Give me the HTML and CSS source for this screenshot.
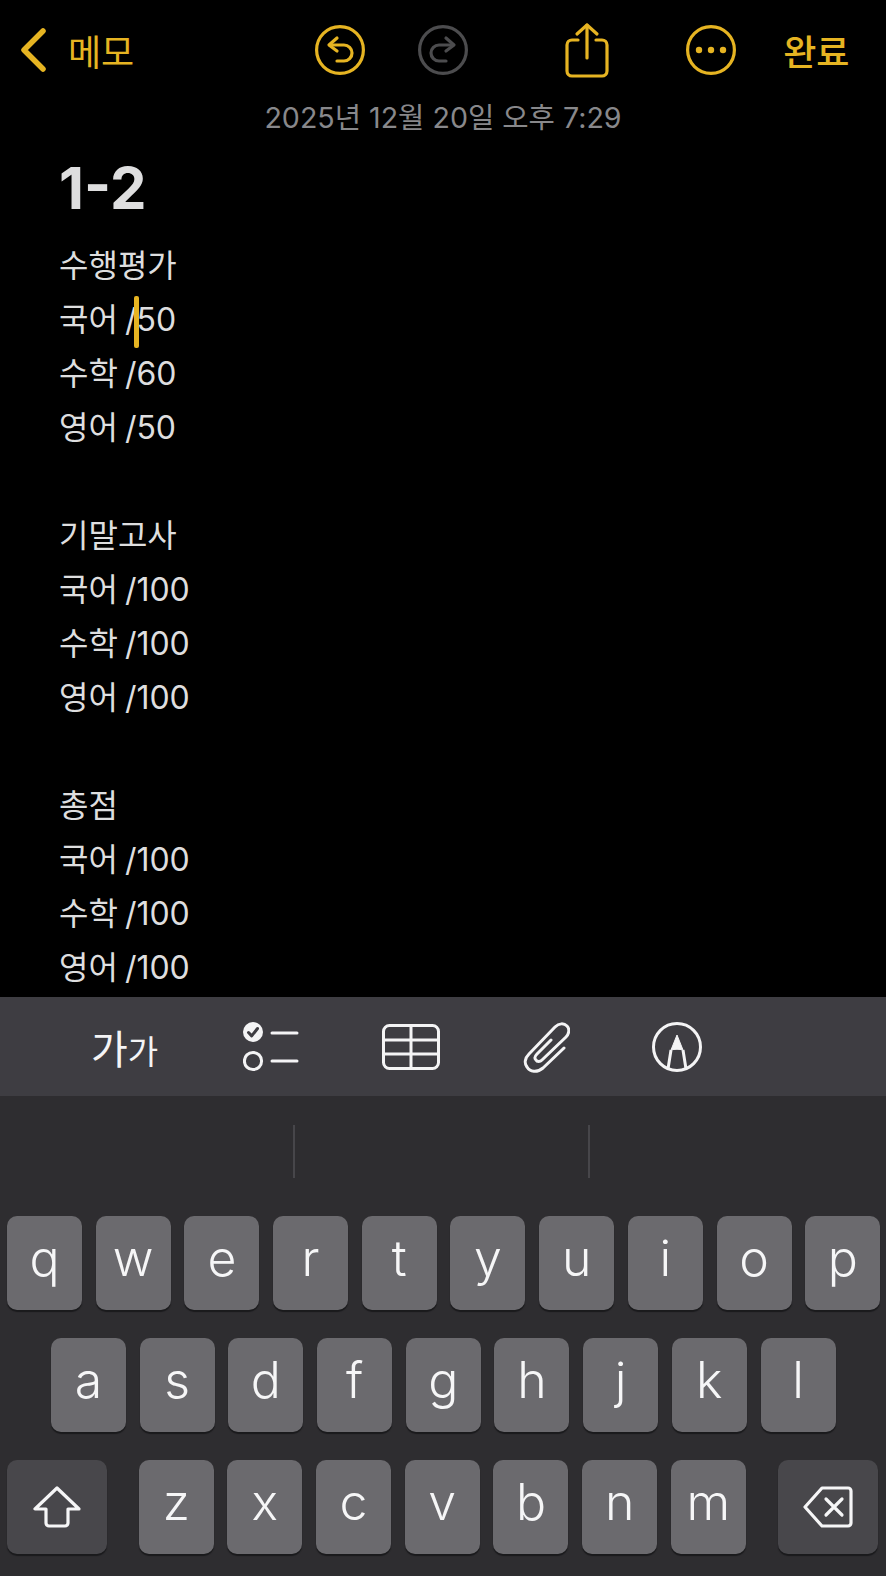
FILE: index.html
```html
<!DOCTYPE html>
<html lang="ko">
<head>
    <meta charset="UTF-8">
    <meta name="viewport" content="width=device-width, initial-scale=1.0">
    <title>메모</title>
    <link rel="stylesheet" href="styles.css">
</head>
<body>
    <div class="page">
        <header class="nav">
            <svg class="nav-back" width="26" height="44" viewBox="0 0 26 44"><path d="M23 3 4 22l19 19" fill="none" stroke="currentColor" stroke-width="5.5" stroke-linecap="round" stroke-linejoin="round"/></svg>
            <span class="nav-label">메모</span>
            <svg class="nav-undo" width="50" height="50" viewBox="0 0 50 50" fill="none" stroke="currentColor" stroke-width="3.2" stroke-linecap="round" stroke-linejoin="round"><circle cx="25" cy="25" r="23.4"/><path d="M15 20h14a8 8 0 0 1 0 16h-7"/><path d="M22 13l-8 7 8 6"/></svg>
            <svg class="nav-redo" width="50" height="50" viewBox="0 0 50 50" fill="none" stroke="currentColor" stroke-width="3.2" stroke-linecap="round" stroke-linejoin="round"><circle cx="25" cy="25" r="23.4"/><path d="M35 20H21a8 8 0 0 0 0 16h7"/><path d="M28 13l8 7-8 6"/></svg>
            <svg class="nav-share" width="44" height="56" viewBox="0 0 44 56" fill="none" stroke="currentColor" stroke-width="3.2" stroke-linecap="round" stroke-linejoin="round"><path d="M13 18H7a5 5 0 0 0-5 5v26a5 5 0 0 0 5 5h30a5 5 0 0 0 5-5V23a5 5 0 0 0-5-5h-6"/><path d="M22 36V3"/><path d="M12 12l10-9 10 9"/></svg>
            <svg class="nav-more" width="50" height="50" viewBox="0 0 50 50"><circle cx="25" cy="25" r="23.4" fill="none" stroke="currentColor" stroke-width="3.2"/><circle cx="13" cy="25" r="3.2" fill="currentColor"/><circle cx="25" cy="25" r="3.2" fill="currentColor"/><circle cx="37" cy="25" r="3.2" fill="currentColor"/></svg>
            <span class="nav-done">완료</span>
        </header>

        <p class="note-date">2025년 12월 20일 오후 7:29</p>

        <main class="note">
            <h1 class="note-title">1-2</h1>
            <div class="note-line">수행평가</div>
            <div class="note-line">국어 /<span class="caret"></span>50</div>
            <div class="note-line">수학 /60</div>
            <div class="note-line">영어 /50</div>
            <div class="note-line">&nbsp;</div>
            <div class="note-line">기말고사</div>
            <div class="note-line">국어 /100</div>
            <div class="note-line">수학 /100</div>
            <div class="note-line">영어 /100</div>
            <div class="note-line">&nbsp;</div>
            <div class="note-line">총점</div>
            <div class="note-line">국어 /100</div>
            <div class="note-line">수학 /100</div>
            <div class="note-line">영어 /100</div>
        </main>

        <div class="toolbar">
            <span class="tool-format">가<small>가</small></span>
            <svg class="tool-list" width="56" height="50" viewBox="0 0 56 50" fill="none" stroke="currentColor" stroke-width="3" stroke-linecap="round">
                <circle cx="10" cy="10" r="10" fill="currentColor" stroke="none"/>
                <path d="M5.5 10.5l3.2 3.4 5.8-7.4" stroke="#3e3d42" stroke-linejoin="round"/>
                <circle cx="10" cy="39" r="8.6"/>
                <path d="M29 11h25M29 39h25"/>
            </svg>
            <svg class="tool-table" width="58" height="46" viewBox="0 0 58 46" fill="none" stroke="currentColor" stroke-width="3"><rect x="1.5" y="1.5" width="55" height="43" rx="6"/><path d="M1.5 16h55M1.5 30h55M29 1.5v43"/></svg>
            <svg class="tool-clip" width="48" height="52" viewBox="0 0 48 52" fill="none" stroke="currentColor" stroke-width="3" stroke-linecap="round" stroke-linejoin="round"><path d="M42 27 21 47c-6 5-13 4-16-1-3-4-2-9 2-13L33 6c4-4 9-4 12-1 3 3 2 8-1 11L20 39c-2 2-5 2-6 0-2-2-1-4 1-6l14-14"/></svg>
            <svg class="tool-markup" width="50" height="50" viewBox="0 0 50 50" fill="none" stroke="currentColor" stroke-width="3"><circle cx="25" cy="25" r="23.5"/><path d="M19 28l-3 19M31 28l3 19"/><path d="M25 13l-6 15c4-1 8-1 12 0z" fill="currentColor" stroke-width="1" stroke-linejoin="round"/></svg>
        </div>

        <div class="keyboard">
            <div class="suggest"><span class="suggest-bar"></span><span class="suggest-bar"></span></div>
            <div class="key-row">
                <span class="key">q</span><span class="key">w</span><span class="key">e</span><span class="key">r</span><span class="key">t</span><span class="key">y</span><span class="key">u</span><span class="key">i</span><span class="key">o</span><span class="key">p</span>
            </div>
            <div class="key-row key-row-mid">
                <span class="key">a</span><span class="key">s</span><span class="key">d</span><span class="key">f</span><span class="key">g</span><span class="key">h</span><span class="key">j</span><span class="key">k</span><span class="key">l</span>
            </div>
            <div class="key-row key-row-last">
                <span class="key key-fn key-shift">
                    <svg width="48" height="42" viewBox="0 0 48 42" fill="none" stroke="currentColor" stroke-width="3.2" stroke-linejoin="round"><path d="M24 2 2 23h11v14a3 3 0 0 0 3 3h16a3 3 0 0 0 3-3V23h11z"/></svg>
                </span>
                <span class="key">z</span><span class="key">x</span><span class="key">c</span><span class="key">v</span><span class="key">b</span><span class="key">n</span><span class="key">m</span>
                <span class="key key-fn key-delete">
                    <svg width="50" height="42" viewBox="0 0 50 42" fill="none" stroke="currentColor" stroke-width="3.2" stroke-linecap="round" stroke-linejoin="round"><path d="M19 2h26a3 3 0 0 1 3 3v32a3 3 0 0 1-3 3H19L2 21z"/><path d="M23 13l16 16M39 13 23 29"/></svg>
                </span>
            </div>
        </div>
    </div>
</body>
</html>
```

FILE: styles.css
```css
* {
    box-sizing: border-box;
}
body {
    margin: 0;
    background: #000;
    font-family: Inter, "Noto Sans CJK KR", sans-serif;
}
.page {
    width: 886px;
    height: 1576px;
    display: flex;
    flex-direction: column;
    overflow: hidden;
}

.nav {
    height: 100px;
    display: flex;
    align-items: center;
    padding-left: 20px;
    color: #e6b422;
}
.nav-label {
    margin-left: 22px;
    font-size: 36px;
}
.nav-undo {
    margin-left: 181px;
}
.nav-redo {
    margin-left: 53px;
    color: #4c4c4e;
}
.nav-share {
    margin-left: 97px;
}
.nav-more {
    margin-left: 77px;
}
.nav-done {
    margin-left: 47px;
    font-size: 36px;
    font-weight: 500;
}

.note-date {
    margin: 0;
    height: 36px;
    line-height: 36px;
    text-align: center;
    font-size: 28.6px;
    color: #88888b;
}

.note {
    flex: 1;
    padding-left: 59px;
    color: #dededf;
}
.note-title {
    margin: 16px 0 15px;
    height: 72px;
    line-height: 72px;
    font-size: 58px;
    font-weight: 700;
}
.note-line {
    height: 54px;
    line-height: 54px;
    font-size: 32px;
    word-spacing: -2px;
}
.caret {
    position: relative;
}
.caret::after {
    content: "";
    position: absolute;
    left: -2px;
    top: -4px;
    width: 5px;
    height: 52px;
    border-radius: 2px;
    background: #e6b422;
}

.toolbar {
    height: 99px;
    flex: none;
    display: flex;
    align-items: center;
    background: #3e3d42;
    color: #f4f4f5;
}
.tool-format {
    margin-left: 91px;
    font-size: 40px;
}
.tool-format small {
    font-size: 33px;
}
.tool-list {
    margin-left: 85px;
}
.tool-table {
    margin-left: 83px;
}
.tool-clip {
    margin-left: 82px;
}
.tool-markup {
    margin-left: 82px;
}

.keyboard {
    height: 480px;
    flex: none;
    background: #2e2d30;
}
.suggest {
    height: 120px;
    padding-top: 29px;
    display: flex;
    gap: 293px;
    padding-left: 293px;
}
.suggest-bar {
    width: 2px;
    height: 53px;
    background: #47464a;
}
.key-row {
    display: flex;
    gap: 13.7px;
    padding-left: 7px;
    margin-bottom: 28px;
}
.key-row-mid {
    padding-left: 51px;
}
.key-row-last {
    padding-left: 7px;
}
.key {
    width: 75px;
    height: 94px;
    padding-bottom: 10px;
    display: flex;
    align-items: center;
    justify-content: center;
    border-radius: 10px;
    background: #6b6a6e;
    box-shadow: 0 2px 1px #1a1a1c;
    color: #f6f6f7;
    font-size: 50px;
    font-weight: 300;
}
.key-fn {
    width: 100px;
    padding-bottom: 0;
    background: #48474b;
}
.key-shift {
    margin-right: 18px;
}
.key-delete {
    margin-left: 18px;
}
```
